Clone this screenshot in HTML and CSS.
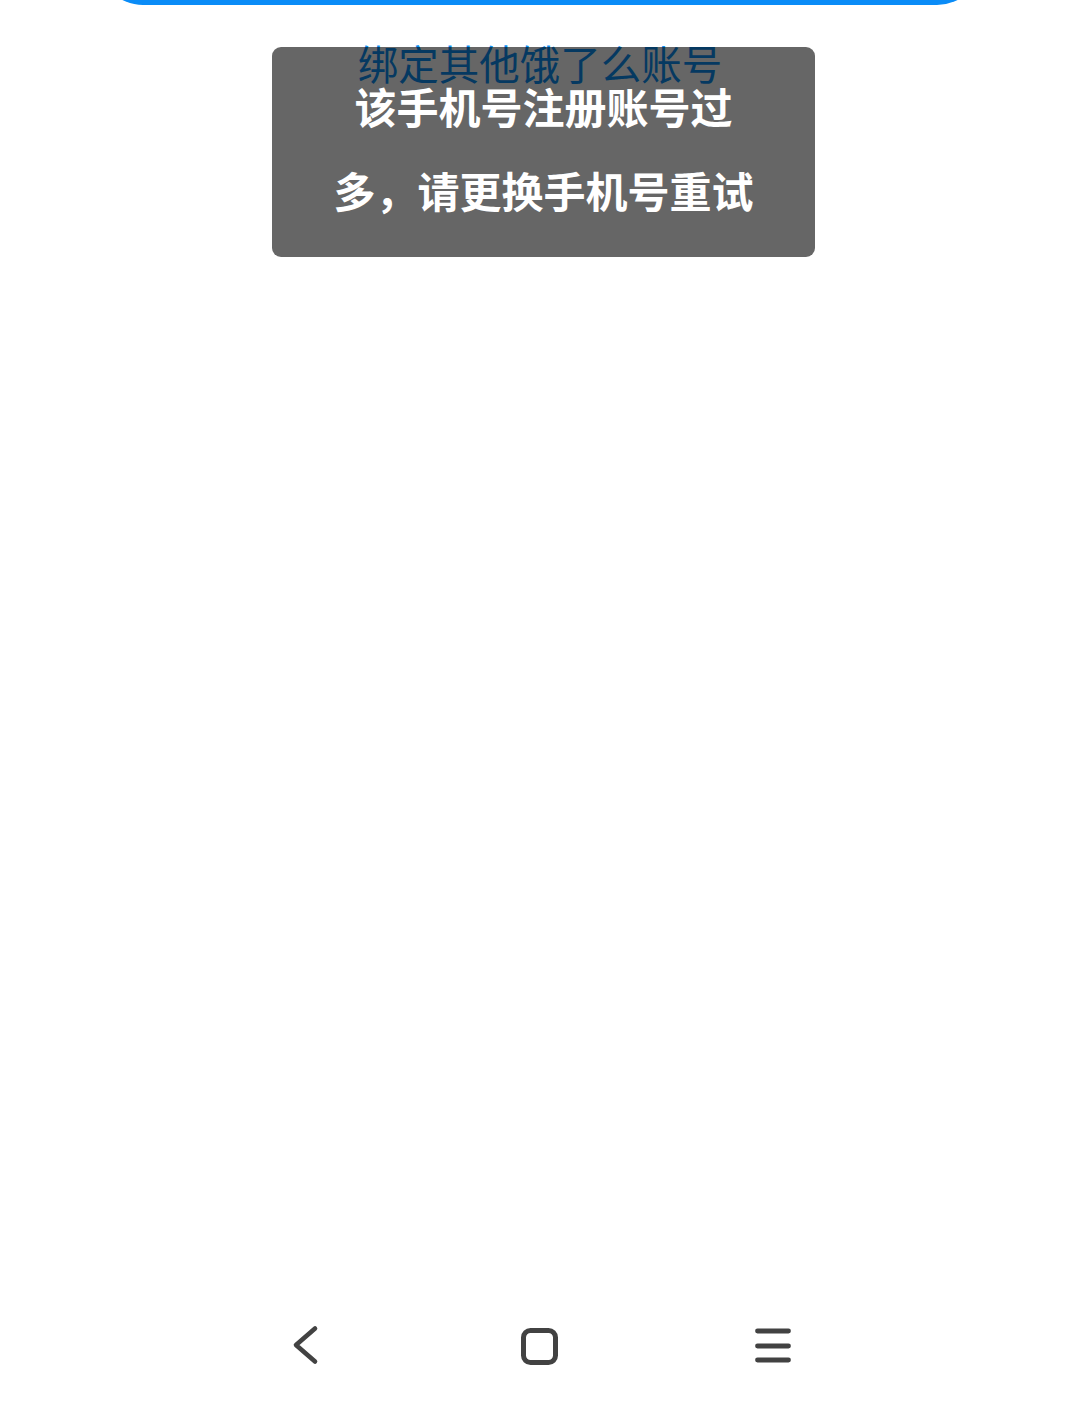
FILE: index.html
```html
<!DOCTYPE html>
<html lang="zh-CN">
<head>
<meta charset="utf-8">
<title>绑定其他饿了么账号</title>
<link rel="stylesheet" href="styles.css">
</head>
<body>
<div class="page">
  <div class="btn"></div>
  <div class="link">绑定其他饿了么账号</div>
  <div class="spacer"></div>
  <nav class="nav">
    <div class="nav-item">
      <svg width="48" height="48" viewBox="0 0 48 48"><path d="M33 6.5 L14 23 L33 39.5" fill="none" stroke="#424242" stroke-width="4.6" stroke-linecap="round" stroke-linejoin="round"/></svg>
    </div>
    <div class="nav-item">
      <svg width="48" height="48" viewBox="0 0 48 48"><rect x="7.5" y="8.5" width="32" height="32" rx="7" fill="none" stroke="#424242" stroke-width="5"/></svg>
    </div>
    <div class="nav-item">
      <svg width="48" height="48" viewBox="0 0 48 48"><path d="M7.5 9 H38.5 M7.5 24 H38.5 M7.5 38 H38.5" fill="none" stroke="#424242" stroke-width="4.8" stroke-linecap="round"/></svg>
    </div>
  </nav>
  <div class="toast">
    <span class="toast-line">该手机号注册账号过</span>
    <span class="toast-line">多，请更换手机号重试</span>
  </div>
</div>
</body>
</html>
```

FILE: styles.css
```css
html, body {
  margin: 0;
  padding: 0;
  background: #ffffff;
}
.page {
  position: relative;
  width: 1080px;
  height: 1408px;
  overflow: hidden;
  display: flex;
  flex-direction: column;
  font-family: "Noto Sans CJK SC", "Noto Sans", sans-serif;
}
.btn {
  flex: none;
  height: 90px;
  margin: -85px 98px 0 98px;
  border-radius: 45px;
  background: #0a8cf7;
}
.link {
  flex: none;
  margin-top: 37px;
  text-align: center;
  font-size: 40.5px;
  line-height: 41px;
  color: #0e8ff2;
}
.spacer {
  flex: 1;
}
.nav {
  flex: none;
  height: 124px;
  display: flex;
  justify-content: center;
  align-items: center;
}
.nav-item {
  width: 234px;
  display: flex;
  justify-content: center;
  align-items: center;
}
.nav-item svg {
  display: block;
}
.toast {
  position: absolute;
  top: 47px;
  left: 272px;
  width: 543px;
  height: 210px;
  box-sizing: border-box;
  padding: 17px 0;
  border-radius: 9px;
  background: rgba(0, 0, 0, 0.6);
  display: flex;
  flex-direction: column;
  align-items: center;
  color: #ffffff;
  font-size: 42px;
  font-weight: 700;
  line-height: 84px;
}
.toast-line {
  display: block;
  white-space: nowrap;
}
```
